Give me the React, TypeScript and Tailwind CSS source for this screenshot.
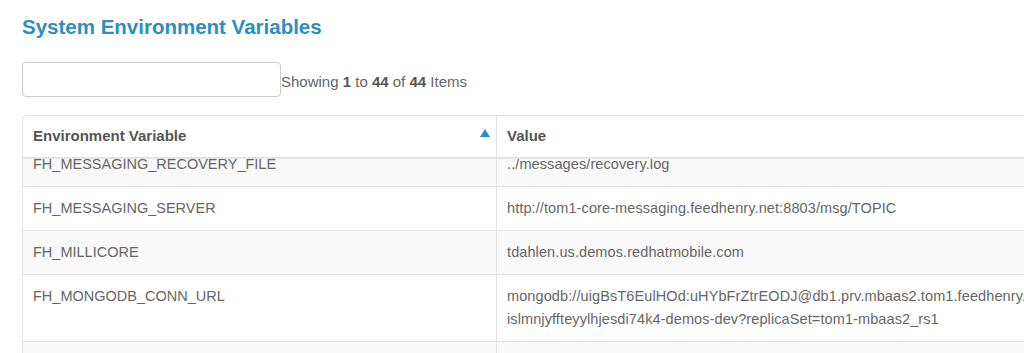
import React from 'react';

type EnvVar = { name: string; lines: string[] };

// filas visibles de la tabla (la primera queda medio oculta bajo la cabecera)
const variables: EnvVar[] = [
  { name: 'FH_MESSAGING_RECOVERY_FILE', lines: ['../messages/recovery.log'] },
  { name: 'FH_MESSAGING_SERVER', lines: ['http://tom1-core-messaging.feedhenry.net:8803/msg/TOPIC'] },
  { name: 'FH_MILLICORE', lines: ['tdahlen.us.demos.redhatmobile.com'] },
  {
    name: 'FH_MONGODB_CONN_URL',
    lines: [
      'mongodb://uigBsT6EulHOd:uHYbFrZtrEODJ@db1.prv.mbaas2.tom1.feedhenry.net:27017/fh-mbaas2-',
      'islmnjyffteyylhjesdi74k4-demos-dev?replicaSet=tom1-mbaas2_rs1',
    ],
  },
  { name: 'FH_MONGODB_CONN_URL_SECONDARY', lines: ['mongodb://db2.prv.mbaas2.tom1.feedhenry.net:27017'] },
];

const App: React.FC = () => {
  return (
    <div className="w-[1024px] h-[353px] overflow-hidden bg-white font-['Liberation_Sans',Arial,sans-serif] text-[#666]">
      <div className="pl-[22px] pt-[14px]">
        <h2 className="text-[20.5px] leading-[26px] font-bold text-[#2b8fc3]">System Environment Variables</h2>

        <div className="mt-[22px] flex items-end">
          <input
            type="text"
            className="w-[259px] h-[35px] border border-[#ccc] rounded-[4px] outline-none"
          />
          <span className="text-[15px] leading-[20px] text-[#666] mb-[5px]">
            Showing <strong className="text-[#555]">1</strong> to <strong className="text-[#555]">44</strong> of{' '}
            <strong className="text-[#555]">44</strong> Items
          </span>
        </div>

        <div className="mt-[18px] w-[1200px] border border-[#e3e3e3] rounded-tl-[4px]">
          {/* Cabecera fija */}
          <div className="flex border-b-2 border-[#e3e3e3] h-[43px]">
            <div className="w-[474px] shrink-0 flex items-center justify-between px-[10px] border-r border-[#e3e3e3]">
              <span className="text-[15px] font-bold text-[#555]">Environment Variable</span>
              <svg width="10" height="8" viewBox="0 0 10 8" className="mb-[8px] mr-[-4px]">
                <polygon points="5,0 10,8 0,8" fill="#2b8fc3" />
              </svg>
            </div>
            <div className="flex-1 flex items-center px-[10px]">
              <span className="text-[15px] font-bold text-[#555]">Value</span>
            </div>
          </div>

          {/* Cuerpo con scroll */}
          <div className="h-[200px] overflow-hidden">
            <div className="-mt-[16px]">
              {variables.map((v, i) => (
                <div
                  key={v.name}
                  className={`flex border-b border-[#e3e3e3] text-[14.5px] leading-[23px] ${i % 2 === 0 ? 'bg-[#f9f9f9]' : 'bg-white'}`}
                >
                  <div className="w-[474px] shrink-0 px-[10px] py-[10px] border-r border-[#e3e3e3]">{v.name}</div>
                  <div className="flex-1 px-[10px] py-[10px] whitespace-nowrap tracking-[0.1px]">
                    {v.lines.map(l => (
                      <div key={l}>{l}</div>
                    ))}
                  </div>
                </div>
              ))}
            </div>
          </div>
        </div>
      </div>
    </div>
  );
};

export default App;
